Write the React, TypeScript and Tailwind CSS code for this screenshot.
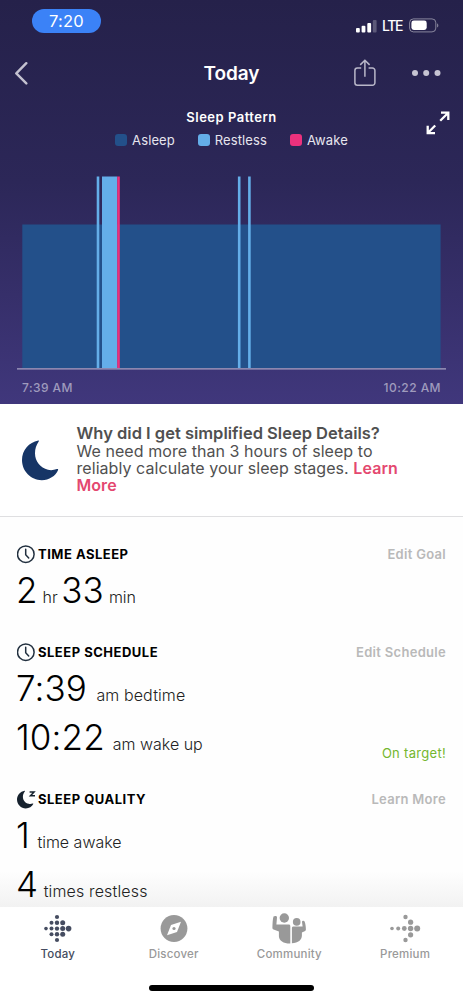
import type { ReactNode } from "react";

type Segment = { x: number; width: number; color: string };

const segments: Segment[] = [
  { x: 96.7, width: 2.6, color: "#64aee9" },
  { x: 102, width: 15.2, color: "#64aee9" },
  { x: 117.2, width: 2.6, color: "#ec317d" },
  { x: 237.9, width: 2.6, color: "#64aee9" },
  { x: 248.1, width: 2.6, color: "#64aee9" },
];

function StatusBar() {
  return (
    <div className="flex h-[42px] items-start justify-between pl-8 pr-[23px] pt-[9px]">
      <div className="flex h-6 w-[69px] items-center justify-center rounded-full bg-[#3b82f7] text-[16.5px] tracking-[0.2px] text-white">
        7:20
      </div>
      <div className="mt-[9px] flex h-[15px] items-center">
        <svg width="22" height="14" viewBox="0 0 22 14" fill="#fff">
          <rect x="0" y="9" width="3.8" height="4.5" rx="1" />
          <rect x="5.6" y="6.8" width="3.8" height="6.7" rx="1" />
          <rect x="11.3" y="3.9" width="3.8" height="9.6" rx="1" />
          <rect x="16.8" y="1" width="3.8" height="12.5" rx="1" fillOpacity="0.25" />
        </svg>
        <span className="ml-[4px] mt-[1px] w-[22px] text-[14px] font-medium leading-none tracking-[-1.4px] text-white">
          LTE
        </span>
        <svg className="ml-[5px]" width="31" height="15" viewBox="0 0 31 15">
          <rect x="0.6" y="0.9" width="26.2" height="13" rx="3.8" fill="none" stroke="#fff" strokeOpacity="0.45" />
          <rect x="2.4" y="2.6" width="15.3" height="9.4" rx="2.4" fill="#fff" />
          <path d="M28.2 5.2c1.500.9 1.500 3.500 0 4.400z" fill="#fff" fillOpacity="0.5" />
        </svg>
      </div>
    </div>
  );
}

function NavBar() {
  return (
    <div className="grid h-[62px] grid-cols-3 items-center pl-[14px] pr-[22px]">
      <svg width="15" height="24" viewBox="0 0 15 24" fill="none" stroke="#c4c2d0" strokeWidth="2.4">
        <path d="M12.3 2.2 2.3 12.4l10 10" strokeLinecap="round" strokeLinejoin="round" />
      </svg>
      <h1 className="pl-[8px] text-center text-[19px] font-semibold leading-none tracking-[-0.1px] text-white">Today</h1>
      <div className="flex items-center justify-end">
        <svg width="24" height="30" viewBox="0 0 24 30" fill="none" stroke="#b9b7c9" strokeWidth="1.5">
          <path d="M8.2 10H4.4a2.5 2.5 0 0 0-2.5 2.5v12.2a2.5 2.5 0 0 0 2.5 2.5h15a2.5 2.5 0 0 0 2.5-2.5V12.5a2.5 2.5 0 0 0-2.5-2.5h-3.8" />
          <path d="M11.9 18.700V2.400M7.200 6.900l4.700-4.700 4.700 4.700" />
        </svg>
        <svg className="ml-[34px]" width="30" height="8" viewBox="0 0 30 8" fill="#c6c4d2">
          <circle cx="4" cy="4" r="3" />
          <circle cx="15.2" cy="4" r="3" />
          <circle cx="26.5" cy="4" r="3" />
        </svg>
      </div>
    </div>
  );
}

function LegendItem({ swatch, label }: { swatch: string; label: string }) {
  return (
    <div className="flex items-center gap-[5px]">
      <span className={`h-3 w-3 rounded-[3px] ${swatch}`} />
      <span>{label}</span>
    </div>
  );
}

function SleepChart() {
  return (
    <section>
      <div className="relative h-[60px] pt-1">
        <h2 className="text-center text-[13px] font-semibold leading-[18px] tracking-[0.5px] text-white">
          Sleep Pattern
        </h2>
        <div className="mt-[5px] flex justify-center gap-[23px] text-[13px] leading-[18px] tracking-[0.1px] text-[#e6e5ee]">
          <LegendItem swatch="bg-[#23508a]" label="Asleep" />
          <LegendItem swatch="bg-[#64aee9]" label="Restless" />
          <LegendItem swatch="bg-[#ec317d]" label="Awake" />
        </div>
        <svg
          className="absolute right-[13px] top-[7px]"
          width="24"
          height="24"
          viewBox="0 0 24 24"
          fill="none"
          stroke="#fff"
          strokeWidth="2.3"
        >
          <path d="M14.2 9.8 22 2M15 1.700h7.300v7.300M9.200 14.500 2 21.700M1.700 14.700v7.400h7.300" />
        </svg>
      </div>
      <svg width="463" height="210" viewBox="0 164 463 210">
        <rect x="22.3" y="224.5" width="418.3" height="144" fill="#23508a" />
        {segments.map((s) => (
          <rect key={s.x} x={s.x} y="176.5" width={s.width} height="192" fill={s.color} />
        ))}
        <rect x="17" y="368" width="429" height="1.7" fill="#8c87af" />
      </svg>
      <div className="flex justify-between px-[22px] pt-[5.5px] text-[12px] font-medium leading-4 tracking-[0.45px] text-[#9f9bbd]">
        <span>7:39 AM</span>
        <span>10:22 AM</span>
      </div>
    </section>
  );
}

function SimplifiedNotice() {
  return (
    <section className="flex h-[113px] border-b border-[#dfdfe1] pl-[22px] pt-5">
      <svg className="mt-4" width="37" height="41" viewBox="0 0 37 41" fill="#163566">
        <path d="M16.300 .5C7 2.200 0 10.300 0 20c0 11.200 8.900 20.200 19.800 20.200 7.300 0 13.700-4 16.300-10.100.3-.8-.4-1.400-1.200-1.100-3 1-5.900 1.600-8.900.7-7.700-2.100-13-8.300-13-16.500 0-4.400 1.300-8.200 3.700-11.700.4-.6.200-1.100-.4-1z" />
      </svg>
      <div className="ml-[17.5px] text-[16px] leading-[17px] text-[#505050]">
        <h3 className="mb-[1px] text-[16.5px] font-semibold leading-[18px]">
          Why did I get simplified Sleep Details?
        </h3>
        <p className="tracking-[0.06px]">
          We need more than 3 hours of sleep to
          <br />
          reliably calculate your sleep stages.{" "}
          <a className="font-semibold text-[#e4486f]">
            Learn
            <br />
            More
          </a>
        </p>
      </div>
    </section>
  );
}

function ClockIcon() {
  return (
    <svg width="19" height="19" viewBox="0 0 19 19" fill="none" stroke="#22303f" strokeWidth="1.5">
      <circle cx="8.8" cy="9.2" r="8.3" />
      <path d="M8.7 4.200v5.500l3 3.300" strokeLinecap="round" />
    </svg>
  );
}

function MoonIcon() {
  return (
    <svg width="19" height="19" viewBox="0 0 19 19" fill="#16222e">
      <path d="M7.600.7C3.300 1.400 0 5.100 0 9.600c0 5 4 8.900 8.800 8.900 3.300 0 6.200-1.700 7.500-4.400.2-.5-.1-.8-.6-.6-1.300.5-2.600.6-4 .3-3.500-.8-5.800-3.600-5.800-7.100 0-2 .7-3.700 1.900-5.200.3-.4.200-.8-.2-.8z" />
      <path d="M12.600 2.100h4.400l-3.500 3.600H18" fill="none" stroke="#16222e" strokeWidth="1.5" />
    </svg>
  );
}

type MetricProps = { icon: ReactNode; title: string; action: string; children: ReactNode };

function Metric({ icon, title, action, children }: MetricProps) {
  return (
    <section>
      <div className="mb-[2px] flex h-5 items-center text-[13px] font-semibold">
        {icon}
        <h3 className="ml-[2px] font-bold tracking-[0.5px] text-black">{title}</h3>
        <span className="ml-auto tracking-[0.3px] text-[#b9b9b9]">{action}</span>
      </div>
      {children}
    </section>
  );
}

function Big({ children }: { children: ReactNode }) {
  return <span className="-ml-px text-[35px] font-[270] tracking-[0.1px] text-black">{children}</span>;
}

function TabItem({ label, active, children }: { label: string; active?: boolean; children: ReactNode }) {
  return (
    <div className={`flex flex-1 flex-col items-center ${active ? "text-[#454c60]" : "text-[#999]"}`}>
      <svg width="36" height="34" viewBox="0 0 36 34" fill="currentColor">
        {children}
      </svg>
      <span className="mt-px text-[11.5px] font-medium leading-4 tracking-[0.2px]">{label}</span>
    </div>
  );
}

function TabBar() {
  return (
    <nav className="h-[93px] bg-white">
      <div className="flex pt-1">
        <TabItem label="Today" active>
          <circle cx="17" cy="6" r="2.1" />
          <circle cx="11.5" cy="11.8" r="2" />
          <circle cx="17" cy="11.8" r="2.2" />
          <circle cx="22.7" cy="11.8" r="2.5" />
          <circle cx="6" cy="17.6" r="1.8" />
          <circle cx="11.5" cy="17.6" r="2" />
          <circle cx="17" cy="17.6" r="2.2" />
          <circle cx="22.7" cy="17.6" r="2.5" />
          <circle cx="28.6" cy="17.6" r="2.8" />
          <circle cx="11.5" cy="23.3" r="2" />
          <circle cx="17" cy="23.3" r="2.2" />
          <circle cx="22.7" cy="23.3" r="2.5" />
          <circle cx="17" cy="29" r="2.1" />
        </TabItem>
        <TabItem label="Discover">
          <circle cx="18" cy="17.5" r="13.4" />
          <path d="M25 10.800 21 20.900 11 24.200 15 13.900z" fill="#fff" />
          <circle cx="18" cy="17.5" r="1.6" />
        </TabItem>
        <TabItem label="Community">
          <circle cx="13.3" cy="7" r="4.7" />
          <circle cx="25.7" cy="10.9" r="3.8" />
          <path d="M2.500 5.600c1.300-1.100 3.600-.6 3.500.8l-.6 7h12.200c1.200 0 1.700.5 1.700 1.600v17.500c-6.700.1-11.300-2.700-11.400-7.300v-4.800l-5.300-1.900c-.9-.4-1.200-1-1.200-1.800.1-3.700.3-8.700 1.100-11.100z" />
          <path d="M20.900 32.200V17.200c0-1.200.5-1.700 1.700-1.700h9l-.6-4.600c.2-1.400 2.200-1.400 2.700-.2.800 2.200 1.200 5.400 1.200 7.600 0 1-.5 1.600-1.300 2l-2.700 1.300v3c0 4.500-3.700 7.500-10 7.600z" />
        </TabItem>
        <TabItem label="Premium">
          <circle cx="18.5" cy="6" r="2.2" />
          <circle cx="23.6" cy="11.2" r="2.6" />
          <circle cx="5" cy="17.5" r="1.8" />
          <circle cx="11.2" cy="17.5" r="2" />
          <circle cx="17.3" cy="17.5" r="2.4" />
          <circle cx="23.6" cy="17.5" r="2.7" />
          <circle cx="30.2" cy="17.5" r="3" />
          <circle cx="23.6" cy="23.8" r="2.6" />
          <circle cx="18.5" cy="29" r="2.2" />
        </TabItem>
      </div>
      <div className="mx-auto mt-[23px] h-[6px] w-[165px] rounded-full bg-black" />
    </nav>
  );
}

export default function App() {
  return (
    <main className="flex h-[1000px] w-[463px] flex-col overflow-hidden bg-white font-['Inter',sans-serif]">
      <header className="h-[404px] shrink-0 bg-linear-to-b from-[#25214a] via-[#2c2758] via-45% to-[#40377c]">
        <StatusBar />
        <NavBar />
        <SleepChart />
      </header>
      <SimplifiedNotice />

      <div className="relative h-[390px] bg-[#fefefe]">
        <div className="absolute inset-x-0 bottom-0 h-9 bg-linear-to-b from-transparent to-[#f2f2f2]" />
        <div className="relative space-y-[27px] px-[17px] pt-[27px] text-[16px] font-light leading-[49px] text-[#222]">
          <Metric icon={<ClockIcon />} title="TIME ASLEEP" action="Edit Goal">
            <p className="h-[49px]">
              <Big>2</Big>
              <span className="ml-[5px]">hr</span> <Big>33</Big>
              <span className="ml-[5px]">min</span>
            </p>
          </Metric>
          <Metric icon={<ClockIcon />} title="SLEEP SCHEDULE" action="Edit Schedule">
            <p className="h-[49px]">
              <Big>7:39</Big>
              <span className="ml-[9.5px] tracking-[0.1px]">am bedtime</span>
            </p>
            <div className="flex h-[49px] items-start justify-between">
              <p>
                <Big>10:22</Big>
                <span className="ml-[8px]">am wake up</span>
              </p>
              <span className="mt-8 text-[13px] font-normal leading-4 tracking-[0.3px] text-[#74b62e]">On target!</span>
            </div>
          </Metric>
          <Metric icon={<MoonIcon />} title="SLEEP QUALITY" action="Learn More">
            <p className="h-[49px]">
              <Big>1</Big>
              <span className="ml-[7.500px]">time awake</span>
            </p>
            <p className="h-[49px]">
              <Big>4</Big>
              <span className="ml-[5.500px] tracking-[0.15px]">times restless</span>
            </p>
          </Metric>
        </div>
      </div>

      <TabBar />
    </main>
  );
}
